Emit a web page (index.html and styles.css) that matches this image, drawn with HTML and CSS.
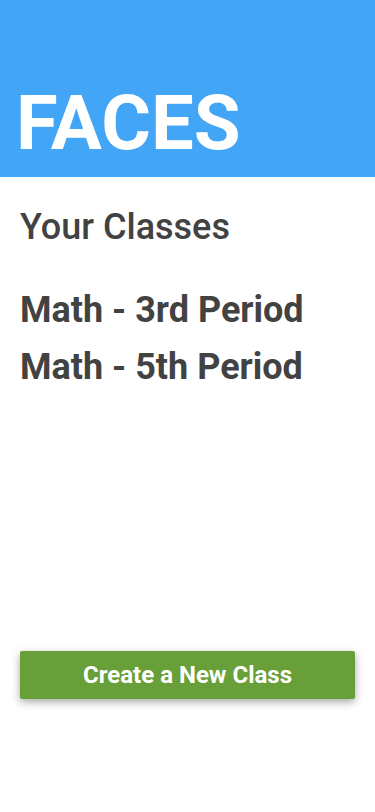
FILE: index.html
```html
<!DOCTYPE html>
<html>
<head>
  <title>FACES</title>
  <link rel="stylesheet" href="styles.css">
</head>
<body>
<div class="app">
  <header class="topbar">
    <h1>FACES</h1>
  </header>
  <main class="content">
    <h2>Your Classes</h2>
    <ul class="classes">
      <li>Math - 3rd Period</li>
      <li>Math - 5th Period</li>
    </ul>
  </main>
  <div class="actions">
    <button class="new-class">Create a New Class</button>
  </div>
</div>
</body>
</html>
```

FILE: styles.css
```css
body { margin: 0; background: #fff; font-family: Roboto, 'Noto Sans', sans-serif; color: #424242; }
.app { display: flex; flex-direction: column; height: 812px; }
.topbar { background: #42a5f5; height: 177px; display: flex; align-items: flex-end; padding: 0 0 0 16px; box-sizing: border-box; }
.topbar h1 { margin: 0 0 16px; color: #fff; font-size: 76px; font-weight: 700; line-height: 1; }
.content { flex: 1; padding: 0 20px; }
.content h2 { margin: 28px 0 0; font-size: 36px; font-weight: 500; line-height: 44px; }
.classes { list-style: none; margin: 33px 0 0; padding: 0; }
.classes li { font-size: 36px; font-weight: 700; line-height: 57px; }
.actions { padding: 0 20px 113px; }
.new-class {
  display: block;
  width: 100%;
  height: 48px;
  border: none;
  border-radius: 2px;
  background: #689f38;
  color: #fff;
  font-family: Roboto, sans-serif;
  font-size: 24px;
  font-weight: 700;
  box-shadow: 0 3px 8px rgba(0,0,0,0.35);
}
```
